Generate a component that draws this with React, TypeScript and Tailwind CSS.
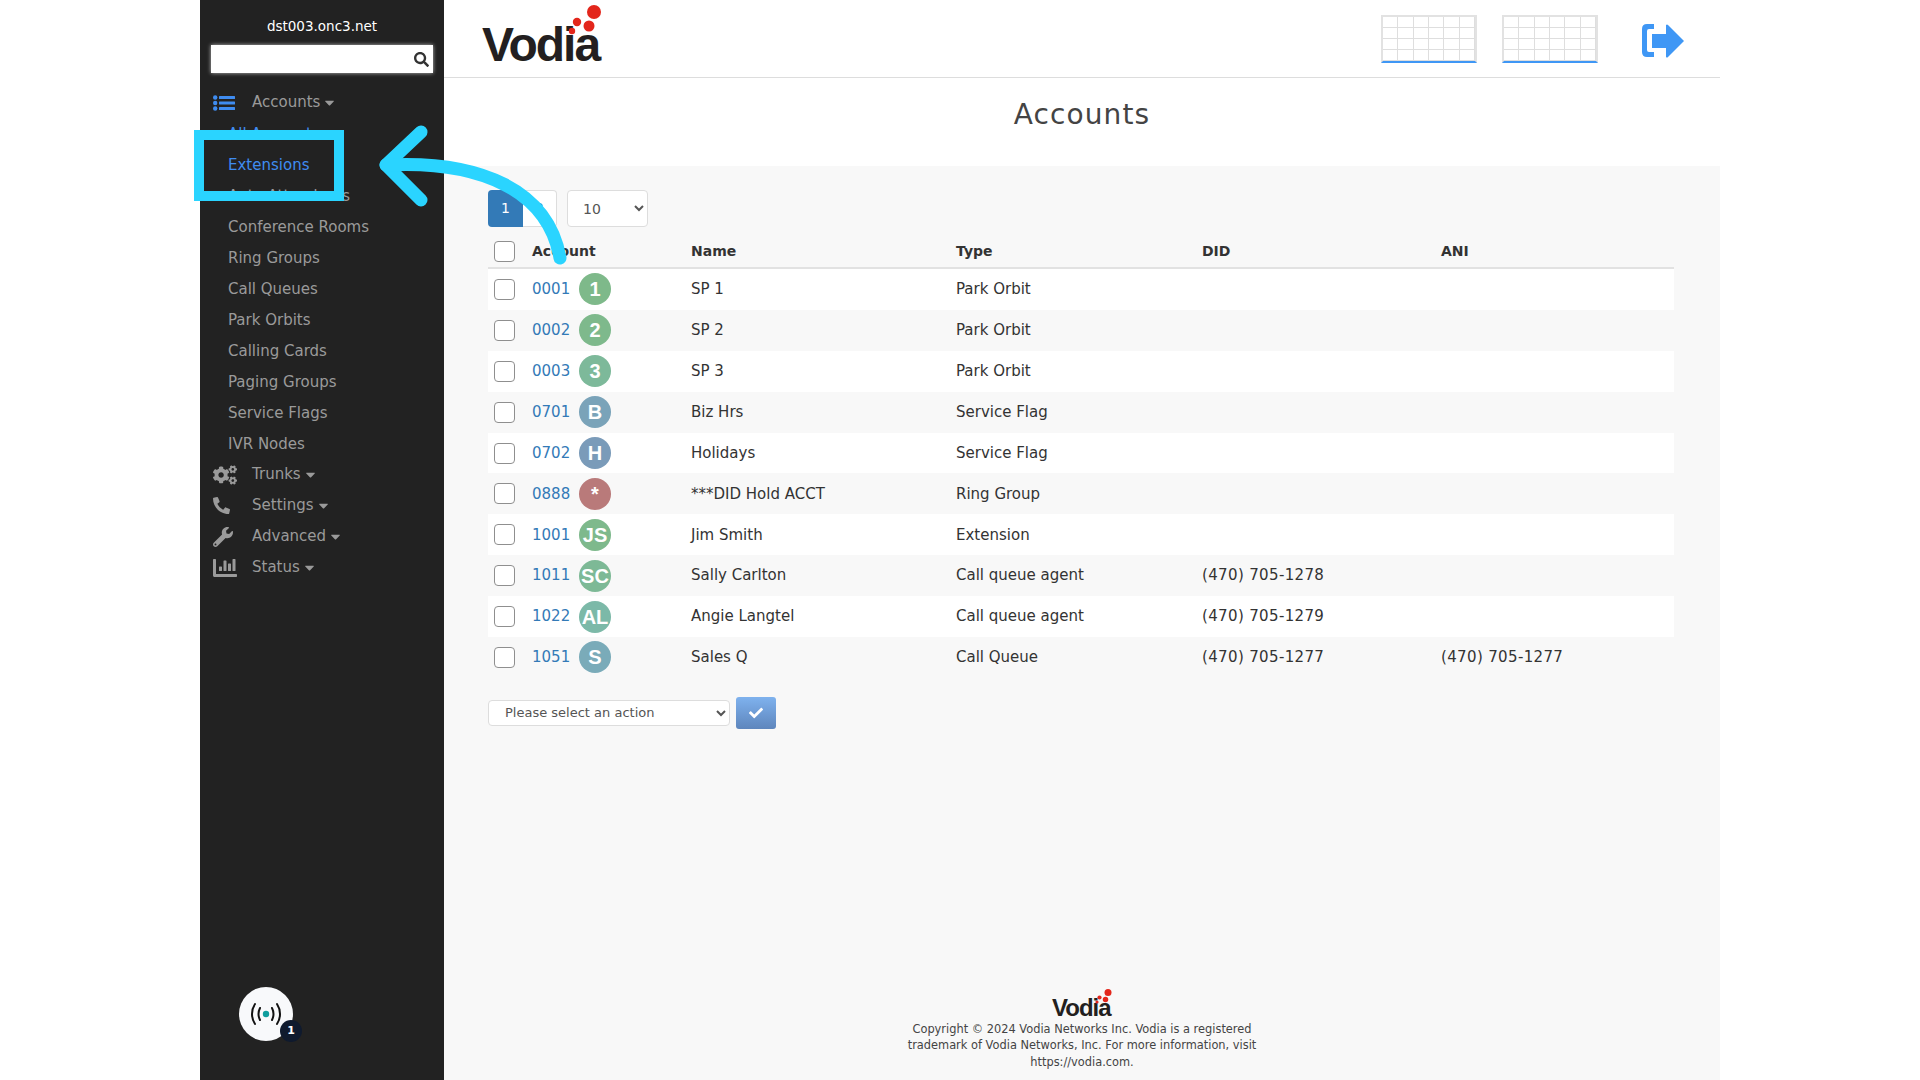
import { FaCogs, FaPhone, FaWrench, FaChartBar, FaSearch, FaCheck, FaCaretDown } from 'react-icons/fa';

interface Account {
    id: string
    badge: string
    color: string
    name: string
    type: string
    did?: string
    ani?: string
}

const accounts: Account[] = [
    {id: '0001', badge: '1', color: 'bg-[#7eb98a]', name: 'SP 1', type: 'Park Orbit'},
    {id: '0002', badge: '2', color: 'bg-[#7eb98c]', name: 'SP 2', type: 'Park Orbit'},
    {id: '0003', badge: '3', color: 'bg-[#7db99a]', name: 'SP 3', type: 'Park Orbit'},
    {id: '0701', badge: 'B', color: 'bg-[#7aa3b9]', name: 'Biz Hrs', type: 'Service Flag'},
    {id: '0702', badge: 'H', color: 'bg-[#7a9bb9]', name: 'Holidays', type: 'Service Flag'},
    {id: '0888', badge: '*', color: 'bg-[#b97a7a]', name: '***DID Hold ACCT', type: 'Ring Group'},
    {id: '1001', badge: 'JS', color: 'bg-[#7eb98c]', name: 'Jim Smith', type: 'Extension'},
    {id: '1011', badge: 'SC', color: 'bg-[#7db996]', name: 'Sally Carlton', type: 'Call queue agent', did: '(470) 705-1278'},
    {id: '1022', badge: 'AL', color: 'bg-[#7cb9a8]', name: 'Angie Langtel', type: 'Call queue agent', did: '(470) 705-1279'},
    {id: '1051', badge: 'S', color: 'bg-[#7aabb9]', name: 'Sales Q', type: 'Call Queue', did: '(470) 705-1277', ani: '(470) 705-1277'},
];

const accountLinks = ['All Accounts', 'Extensions', 'Auto Attendants', 'Conference Rooms', 'Ring Groups', 'Call Queues', 'Park Orbits', 'Calling Cards', 'Paging Groups', 'Service Flags', 'IVR Nodes'];

function MenuHeading({icon, label}: { icon: React.ReactNode, label: string }) {
    return (
        <div className="h-[31px] flex items-center pl-[13px]">
            <div className="w-[39px] shrink-0 flex items-center">{icon}</div>
            <span>{label}</span>
            <FaCaretDown className="ml-[2px] w-[15px] h-[15px]"/>
        </div>
    )
}

function ListIcon() {
    return (
        <svg viewBox="0 0 22 16" className="w-[22px] h-4" fill="#3f8cf0">
            <circle cx="2.2" cy="2.5" r="2.2"/>
            <circle cx="2.2" cy="8" r="2.2"/>
            <circle cx="2.2" cy="13.5" r="2.2"/>
            <rect x="6" y="1" width="16" height="3" rx="0.5"/>
            <rect x="6" y="6.5" width="16" height="3" rx="0.5"/>
            <rect x="6" y="12" width="16" height="3" rx="0.5"/>
        </svg>
    )
}

function Logo({small}: { small?: boolean }) {
    return (
        <div className={`relative font-['Liberation_Sans',sans-serif] font-bold text-[#231f20] ${small ? 'w-[60px] h-[30px] text-[24px] leading-[30px] tracking-[-1px]' : 'w-[120px] h-[60px] text-[48px] leading-[60px] tracking-[-2px]'}`}>
            <span className={`absolute left-0 ${small ? '-bottom-[2px]' : '-bottom-[6px]'}`}>Vodia</span>
            <svg viewBox="0 0 120 60" className="absolute inset-0 w-full h-full overflow-visible">
                <circle cx="112" cy="3" r="7" fill="#e3261b"/>
                <circle cx="107" cy="17" r="5.5" fill="#e3261b"/>
                <circle cx="95" cy="13" r="4.2" fill="#e3261b"/>
                <circle cx="90" cy="22" r="3.2" fill="#e3261b"/>
            </svg>
        </div>
    )
}

// the two little wallboard tables in the top bar
function MiniGrid() {
    return (
        <div className="w-24 h-[48px] grid grid-cols-6 grid-rows-4 border-2 border-[#e2e2e2] border-b-[#3f97f5]">
            {Array.from({length: 24}).map((_, i) => (
                <div key={i} className="border-r border-b border-[#dedede]"/>
            ))}
        </div>
    )
}

function Sidebar() {
    return (
        <aside className="w-[244px] shrink-0 bg-[#222222] flex flex-col text-[#9a9a9a]">
            <div className="pt-[16px] h-[45px] text-center text-[13.5px] leading-5 text-white">dst003.onc3.net</div>
            <div className="mx-[11px] h-[28px] bg-white shadow-[0_0_4px_rgba(255,255,255,0.7)] flex items-center justify-end pr-[4px]">
                <FaSearch className="w-[15px] h-[15px] text-[#333333]"/>
            </div>
            <nav className="mt-[14px] text-[15px]">
                <MenuHeading icon={<ListIcon/>} label="Accounts"/>
                {accountLinks.map((link) => (
                    <div key={link}
                         className={`h-[31px] flex items-center pl-7 pt-[2px] ${link === 'Extensions' || link === 'All Accounts' ? 'text-[#3f8cf0]' : ''}`}>
                        {link}
                    </div>
                ))}
                <MenuHeading icon={<FaCogs className="w-6 h-6"/>} label="Trunks"/>
                <MenuHeading icon={<FaPhone className="w-[17px] h-[17px] scale-x-[-1]"/>} label="Settings"/>
                <MenuHeading icon={<FaWrench className="w-5 h-5"/>} label="Advanced"/>
                <MenuHeading icon={<FaChartBar className="w-6 h-6"/>} label="Status"/>
            </nav>
            <div className="mt-auto mb-[39px] ml-[39px] relative w-[54px] h-[54px] rounded-full bg-[#f8f9fb] flex items-center justify-center">
                <svg viewBox="0 0 32 24" className="w-[32px] h-[24px]" fill="none" stroke="#111111" strokeWidth="2" strokeLinecap="round">
                    <path d="M5 2 C1 8 1 16 5 22"/>
                    <path d="M10 6 C8 10 8 14 10 18"/>
                    <path d="M27 2 C31 8 31 16 27 22"/>
                    <path d="M22 6 C24 10 24 14 22 18"/>
                    <circle cx="16" cy="12" r="3.2" fill="#0f9d9d" stroke="none"/>
                </svg>
                <span className="absolute -right-[9px] -bottom-[1px] w-[22px] h-[22px] rounded-full bg-[#0f1a2e] text-white text-[11px] font-bold flex items-center justify-center">1</span>
            </div>
        </aside>
    )
}

function AccountsTable() {
    return (
        <div className="w-[1186px] text-[15px]">
            <div className="h-[34px] grid grid-cols-[44px_159px_265px_246px_239px_1fr] items-center border-b-[2px] border-[#e2e2e2] font-bold text-[14px] text-[#333333]">
                <div className="pl-[6px] flex"><Check/></div>
                <div>Account</div>
                <div>Name</div>
                <div>Type</div>
                <div>DID</div>
                <div>ANI</div>
            </div>
            {accounts.map((row, i) => (
                <div key={row.id}
                     className={`h-[40.9px] grid grid-cols-[44px_159px_265px_246px_239px_1fr] items-center text-[#333333] ${i % 2 === 0 ? 'bg-white' : 'bg-[#f8f8f8]'}`}>
                    <div className="pl-[6px] flex"><Check/></div>
                    <div className="flex items-center">
                        <span className="w-[47px] text-[#337ab7]">{row.id}</span>
                        <span className={`w-8 h-8 rounded-full flex items-center justify-center text-white font-bold text-[20px] font-['Liberation_Sans',sans-serif] ${row.color}`}>{row.badge}</span>
                    </div>
                    <div>{row.name}</div>
                    <div>{row.type}</div>
                    <div className="tracking-[0.35px]">{row.did}</div>
                    <div className="tracking-[0.35px]">{row.ani}</div>
                </div>
            ))}
        </div>
    )
}

function Check() {
    return <input type="checkbox" className="appearance-none w-[21px] h-[21px] bg-white border border-[#8f8f8f] rounded-[4px]"/>
}

export default function App() {
    return (
        <div className="relative w-full h-[1080px] overflow-hidden bg-white px-[200px] flex font-['DejaVu_Sans',sans-serif]">
            <Sidebar/>
            <main className="flex-1 flex flex-col">
                <header className="h-[78px] shrink-0 border-b border-[#dddddd] flex items-center px-[38px]">
                    <Logo/>
                    <div className="ml-auto flex items-center gap-[25px] pt-[1px]">
                        <MiniGrid/>
                        <MiniGrid/>
                        <svg viewBox="0 0 42 34" className="ml-[19px] mr-[-2px] mt-[4px] w-[42px] h-[34px]" fill="#3f97f5">
                            <path d="M12 0 L5 0 Q0 0 0 5 L0 28 Q0 33 5 33 L12 33 L12 28 L7 28 Q5 28 5 26 L5 7 Q5 5 7 5 L12 5 Z"/>
                            <path d="M10 10 L24 10 L24 1 Q25 0 26 1 L42 17 L26 33 Q25 34 24 33 L24 24 L10 24 Z"/>
                        </svg>
                    </div>
                </header>
                <h1 className="h-[88px] shrink-0 flex items-center justify-center text-[28px] tracking-[1.1px] text-[#444444] pb-[15px]">Accounts</h1>
                <div className="flex-1 bg-[#f8f8f8] flex flex-col pl-[44px]">
                    <div className="pt-[24px] flex items-center gap-[10px]">
                        <div className="flex h-[37px] text-[14px]">
                            <div className="w-[35px] rounded-l-[4px] bg-[#337ab7] text-white flex items-center justify-center">1</div>
                            <div className="w-[34px] rounded-r-[4px] bg-white border border-[#dddddd] border-l-0 text-[#337ab7] flex items-center justify-center">2</div>
                        </div>
                        <select className="w-[81px] h-[37px] pl-[11px] bg-white border border-[#dddddd] rounded-[4px] text-[14px] text-[#555555]">
                            <option>10</option>
                        </select>
                    </div>
                    <div className="mt-[8px]">
                        <AccountsTable/>
                    </div>
                    <div className="mt-[19px] flex items-center gap-[6px]">
                        <select className="w-[242px] h-[26px] pl-3 bg-white border border-[#dddddd] rounded-[4px] text-[13px] text-[#555555]">
                            <option>Please select an action</option>
                        </select>
                        <button className="w-10 h-[32px] rounded-[3px] bg-gradient-to-b from-[#7fb2ee] to-[#5e86bd] text-white flex items-center justify-center">
                            <FaCheck className="w-[14px] h-[14px]"/>
                        </button>
                    </div>
                    <footer className="mt-auto -ml-[44px] pb-[10px] flex flex-col items-center text-[11.4px] leading-[16.5px] text-[#444444] text-center">
                        <Logo small/>
                        <p className="w-[380px]">Copyright © 2024 Vodia Networks Inc. Vodia is a registered trademark of Vodia Networks, Inc. For more information, visit https://vodia.com.</p>
                    </footer>
                </div>
            </main>

            {/* callout drawn on top of the page */}
            <div className="absolute left-[194px] top-[130px] w-[150px] h-[71px] border-[10px] border-[#2ad4ff]"/>
            <svg viewBox="0 0 1920 1080" className="absolute inset-0 w-[1920px] h-[1080px] pointer-events-none" fill="none" stroke="#2ad4ff" strokeWidth="13" strokeLinecap="round" strokeLinejoin="round">
                <path d="M421 132 L386 165 L421 200"/>
                <path d="M386 165 C480 160 548 190 560 258"/>
            </svg>
        </div>
    )
}
